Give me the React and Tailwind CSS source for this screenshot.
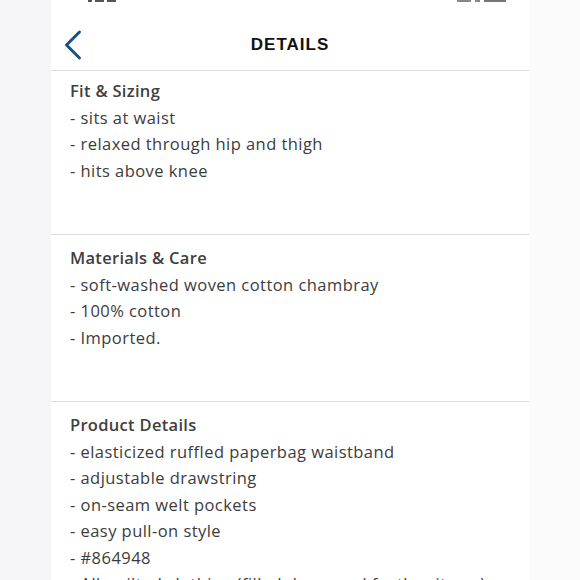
import { ChevronLeft } from 'lucide-react'

const sections = [
  {
    title: 'Fit & Sizing',
    pt: 'pt-[7px]',
    lines: ['sits at waist', 'relaxed through hip and thigh', 'hits above knee'],
  },
  {
    title: 'Materials & Care',
    pt: 'pt-[10px]',
    lines: ['soft-washed woven cotton chambray', '100% cotton', 'Imported.'],
  },
  {
    title: 'Product Details',
    pt: 'pt-[10px]',
    lines: [
      'elasticized ruffled paperbag waistband',
      'adjustable drawstring',
      'on-seam welt pockets',
      'easy pull-on style',
      '#864948',
      'All quilted clothing (filled down and feather items)',
    ],
  },
]

export default function App() {
  return (
    <div className="flex h-[580px] w-[580px] overflow-hidden bg-[#f8f8f9]" style={{ fontFamily: '"Open Sans", "Liberation Sans", sans-serif' }}>
      <div className="w-[51px] shrink-0 bg-[#f5f5f7]" />
      <div className="flex w-[478px] shrink-0 flex-col bg-white">
        {/* status bar, mostly cut off */}
        <div className="flex h-[4px] shrink-0 items-start justify-between px-[37px]">
          <div className="flex gap-[3px]">
            <span className="h-[2px] w-[4px] bg-[#555]" />
            <span className="h-[2px] w-[9px] bg-[#555]" />
            <span className="h-[2px] w-[9px] bg-[#555]" />
          </div>
          <div className="mr-[-14px] flex gap-[4px]">
            <span className="h-[2px] w-[14px] bg-[#888]" />
            <span className="h-[2px] w-[5px] bg-[#888]" />
            <span className="h-[2px] w-[22px] bg-[#777]" />
          </div>
        </div>
        <div className="relative flex h-[67px] shrink-0 justify-center border-b border-[#dcdcdc] pt-[31px]">
          <ChevronLeft className="absolute left-[-4px] top-[15px] h-[52px] w-[52px] text-[#1b4f7d]" strokeWidth={1.35} />
          <h1 className="text-[17px] font-bold leading-[20px] tracking-[1px] text-[#111]" style={{ fontFamily: '"Liberation Sans", Arial, sans-serif' }}>
            DETAILS
          </h1>
        </div>
        {sections.map(s => (
          <div key={s.title} className={`shrink-0 border-b border-[#dcdcdc] px-[19px] ${s.pt} pb-[50px] last:border-b-0`}>
            <h2 className="text-[16.5px] font-semibold leading-[26.5px] tracking-[0.3px] text-[#404040]">{s.title}</h2>
            {s.lines.map(l => (
              <p key={l} className="whitespace-nowrap text-[16.5px] leading-[26.5px] tracking-[0.45px] text-[#3c3c3c]">- {l}</p>
            ))}
          </div>
        ))}
      </div>
      <div className="flex-1 bg-[#fbfbfb]" />
    </div>
  )
}
